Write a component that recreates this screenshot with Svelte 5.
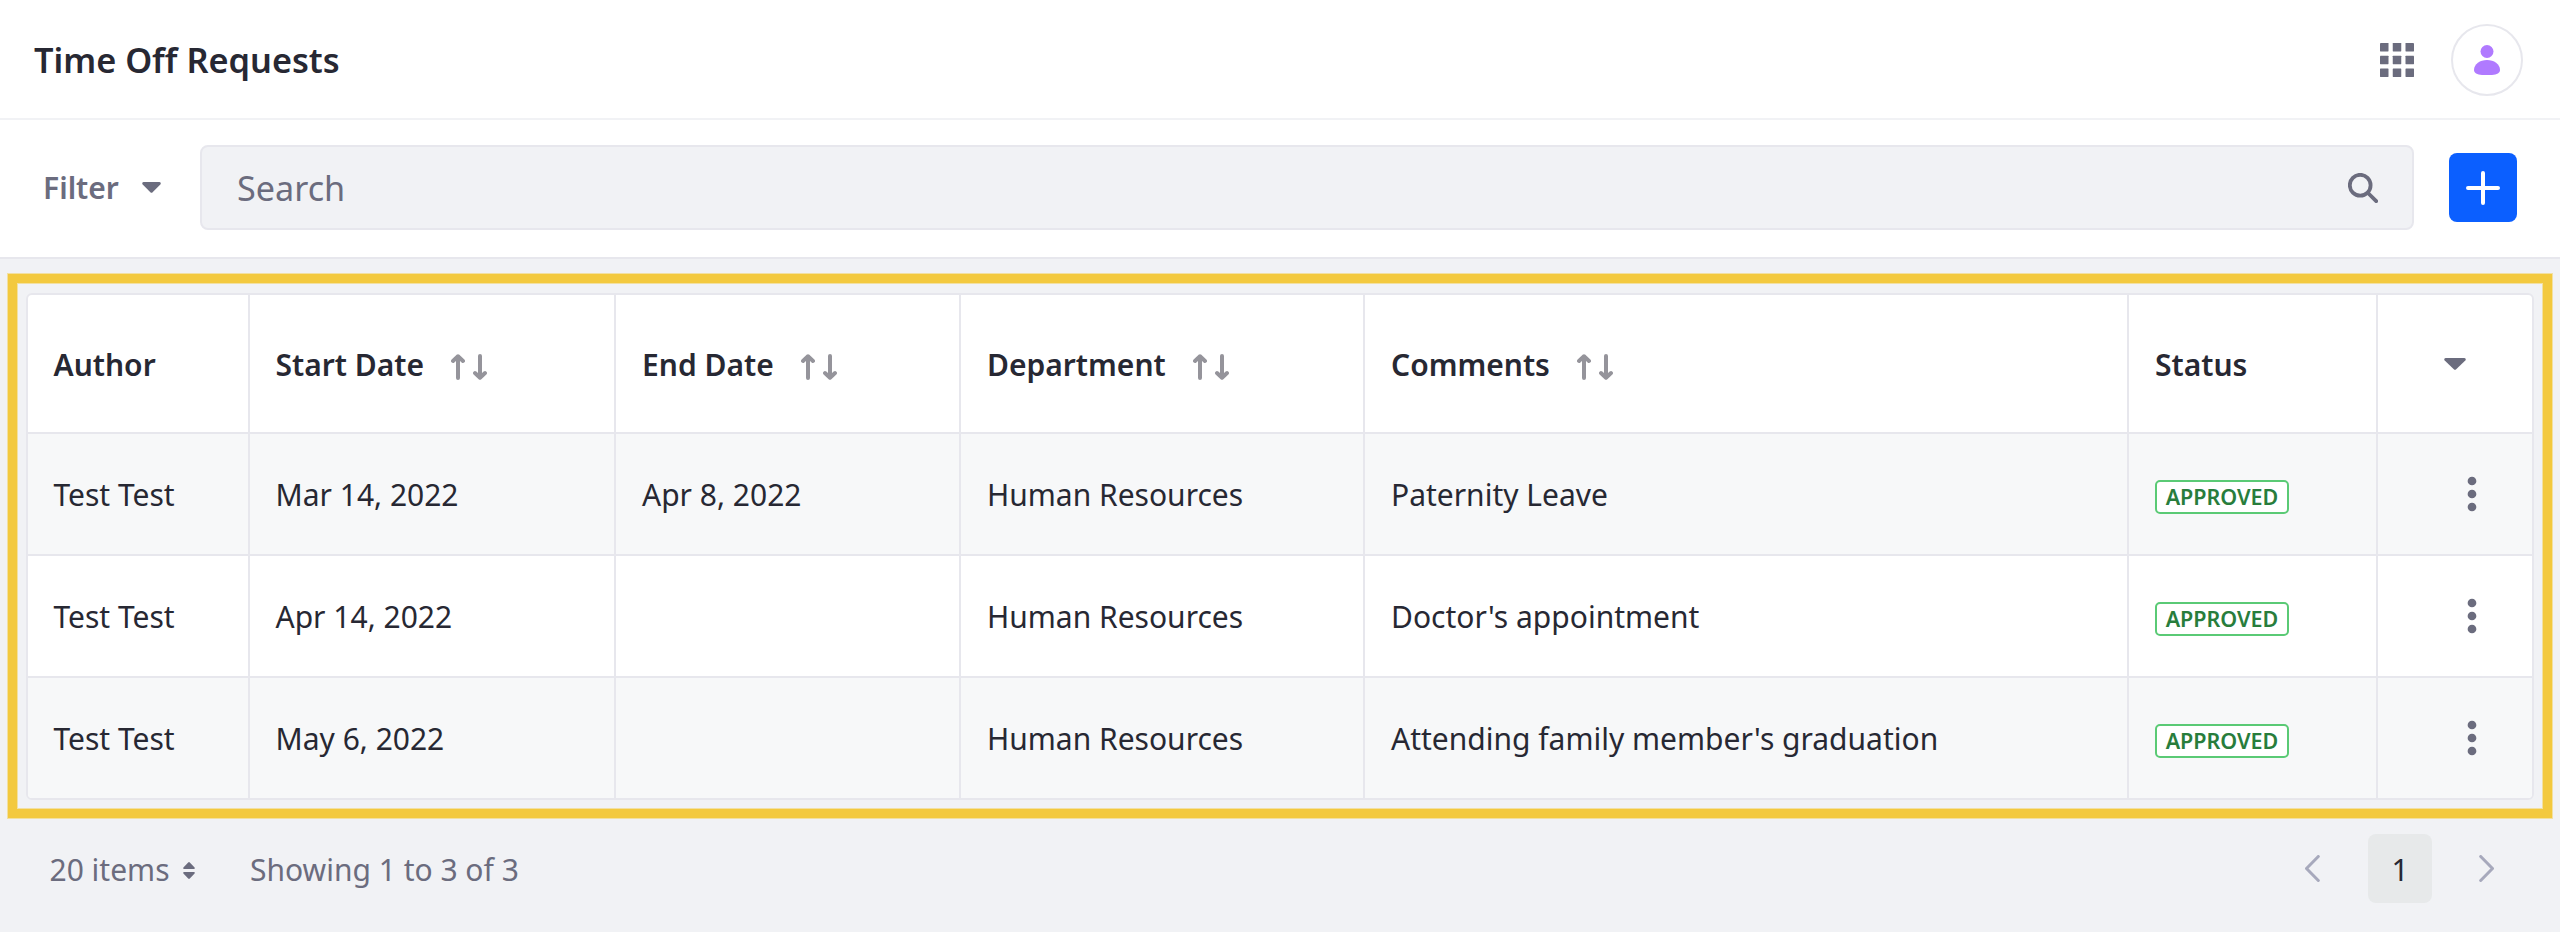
<script>
  const columns = [
    { label: 'Author', width: 222 },
    { label: 'Start Date', width: 366, sortable: true },
    { label: 'End Date', width: 345, sortable: true },
    { label: 'Department', width: 404, sortable: true },
    { label: 'Comments', width: 764, sortable: true },
    { label: 'Status', width: 249 }
  ];
  const rows = [
    ['Test Test', 'Mar 14, 2022', 'Apr 8, 2022', 'Human Resources', 'Paternity Leave'],
    ['Test Test', 'Apr 14, 2022', '', 'Human Resources', "Doctor's appointment"],
    ['Test Test', 'May 6, 2022', '', 'Human Resources', "Attending family member's graduation"]
  ];
  const cells = [0, 1, 2];
</script>

<div class="page">
  <header>
    <h1>Time Off Requests</h1>
    <svg class="apps" width="34" height="34" viewBox="0 0 16 16" fill="#6b6c7e">
      {#each cells as r}{#each cells as c}<rect x={c * 6} y={r * 6} width="4" height="4" rx=".2" />{/each}{/each}
    </svg>
    <span class="avatar">
      <svg width="26" height="30" viewBox="0 0 26 30" fill="#b07aff">
        <circle cx="13" cy="6.5" r="6.5" />
        <path d="M13 15C20 15 26 19 26 25C26 29 21 30.2 13 30.2S0 29 0 25C0 19 6 15 13 15Z" />
      </svg>
    </span>
  </header>

  <div class="toolbar">
    <button class="filter"><span>Filter</span>
      <svg width="19" height="11" viewBox="0 0 19 11"><path d="M1.5 0H17.5Q19.6 .6 18.3 2.4L10.6 10.2Q9.5 11.2 8.4 10.2L.7 2.4Q-.6 .6 1.5 0Z" fill="#6b6c7e" /></svg>
    </button>
    <div class="search">
      <span>Search</span>
      <svg width="30" height="30" viewBox="0 0 30 30" fill="none" stroke="#6b6c7e">
        <circle cx="12.2" cy="12.2" r="10.4" stroke-width="3.8" />
        <path d="M20 20L28.2 28.2" stroke-width="3.8" stroke-linecap="round" />
      </svg>
    </div>
    <button class="add" aria-label="Add">
      <svg width="34" height="34" viewBox="0 0 34 34" stroke="#fff" stroke-width="4" stroke-linecap="round"><path d="M17 2V32M2 17H32" /></svg>
    </button>
  </div>

  <main>
    <div class="highlight">
      <table>
        <colgroup>
          {#each columns as c}<col style:width="{c.width}px" />{/each}
          <col style:width="154px" />
        </colgroup>
        <thead>
          <tr>
            {#each columns as c}
              <th><div class="label">{c.label}
                {#if c.sortable}
                  <svg width="36" height="26" viewBox="0 0 36 26" fill="none" stroke="#95949b" stroke-width="4" stroke-linecap="round" stroke-linejoin="round">
                    <path d="M7 2.3V24M2 7L7 2.3L12 7M29 2V23.7M24 19L29 23.7L34 19" />
                  </svg>
                {/if}
              </div></th>
            {/each}
            <th class="menu"><svg width="22" height="12" viewBox="0 0 22 12"><path d="M1.6 0H20.4Q22.6 .6 21.3 2.5L12.2 11.2Q11 12.3 9.8 11.2L.7 2.5Q-.6 .6 1.6 0Z" fill="#6b6c7e" /></svg></th>
          </tr>
        </thead>
        <tbody>
          {#each rows as row}
            <tr>
              {#each row as cell}<td>{cell}</td>{/each}
              <td class="status"><div><span class="badge">APPROVED</span></div></td>
              <td class="actions">
                <svg width="10" height="36" viewBox="0 0 10 36" fill="#6b6c7e"><circle cx="5" cy="5" r="4.35" /><circle cx="5" cy="18" r="4.35" /><circle cx="5" cy="31" r="4.35" /></svg>
              </td>
            </tr>
          {/each}
        </tbody>
      </table>
    </div>

    <footer>
      <span class="size"><span>20 items</span>
        <svg width="12" height="17" viewBox="0 0 12 17" fill="#6b6c7e"><path d="M5.2 .4Q6 -.3 6.8 .4L11.6 5.4Q12.2 6.8 11 7H1Q-.2 6.8 .4 5.4ZM5.2 16.6Q6 17.3 6.8 16.6L11.6 11.6Q12.2 10.2 11 10H1Q-.2 10.2 .4 11.6Z" /></svg>
      </span>
      <span class="showing">Showing 1 to 3 of 3</span>
      <nav>
        <svg width="15" height="27" viewBox="0 0 15 27"><path d="M13.3 1.5L1.5 13.5L13.3 25.5" /></svg>
        <span class="current">1</span>
        <svg width="15" height="27" viewBox="0 0 15 27"><path d="M1.7 1.5L13.5 13.5L1.7 25.5" /></svg>
      </nav>
    </footer>
  </main>
</div>

<style>
  :global(body) { margin: 0; background: #f1f2f5; }
  .page { width: 2560px; height: 932px; display: flex; flex-direction: column; overflow: hidden; background: #f1f2f5; color: #272833; font-family: "Noto Sans", sans-serif; font-size: 30px; line-height: 47px; }
  .page * { box-sizing: border-box; }
  svg { display: block; flex: none; }
  button { border: 0; padding: 0; font: inherit; background: none; }
  header { height: 120px; flex: none; display: flex; align-items: center; padding: 0 37px 0 34px; background: #fff; border-bottom: 2px solid #f1f2f5; }
  h1 { margin: 0 auto 0 0; padding-top: 1px; font-size: 34.3px; font-weight: 600; }
  header .apps, header .avatar { position: relative; top: 1px; }
  .avatar { width: 72px; height: 72px; margin-left: 37px; display: flex; align-items: center; justify-content: center; border: 2px solid #e7e7ed; border-radius: 50%; }
  .toolbar { height: 139px; flex: none; display: flex; align-items: center; padding: 0 43px 2px 43px; background: #fff; border-bottom: 2px solid #e7e7ed; }
  .filter { width: 157px; display: flex; align-items: center; gap: 23px; color: #6b6c7e; font-weight: 600; }
  .search { flex: 1; height: 85px; display: flex; align-items: center; justify-content: space-between; padding: 0 34px 0 35px; background: #f1f2f5; border: 2px solid #e7e7ed; border-radius: 8px; color: #6b6c7e; font-size: 34.2px; }
  .add { width: 68px; height: 69px; margin-left: 35px; display: flex; align-items: center; justify-content: center; background: #0b5fff; border-radius: 8px; }
  main { padding: 15px 8px 0; }
  .highlight { height: 544px; padding: 10px 9px 9px; border: 9px solid #f3c93f; box-shadow: 0 0 0 1px rgba(243, 201, 63, .45), inset 0 0 0 1px rgba(243, 201, 63, .45); }
  table { width: 2508px; table-layout: fixed; border-collapse: separate; border-spacing: 0; border: 2px solid #e7e7ed; border-radius: 6px; overflow: hidden; background: #fff; }
  th, td { padding: 1px 26px 0; text-align: left; vertical-align: middle; white-space: nowrap; border-right: 2px solid #e7e7ed; border-bottom: 2px solid #e7e7ed; }
  th:nth-child(-n+2), td:nth-child(-n+2) { padding-left: 25.5px; }
  th:last-child, td:last-child { border-right: 0; }
  tr:last-child td { border-bottom: 0; }
  th { height: 139px; padding-top: 2px; font-weight: 600; }
  td { height: 122px; }
  tr:last-child td { height: 120px; }
  tbody tr:nth-child(odd) { background: #f7f8f9; }
  .label { display: flex; align-items: center; gap: 27px; }
  .label svg { position: relative; top: 2px; }
  th.menu, td.actions { padding-top: 0; }
  .menu svg { margin-left: 40px; }
  .actions svg { margin-left: 63px; }
  td.status { padding-top: 6px; }
  .status div { display: flex; }
  .badge { width: 134px; height: 34px; text-align: center; line-height: 30px; font-size: 21.5px; font-weight: 600; color: #287d3c; background: #fff; border: 2px solid #5aca75; border-radius: 5px; }
  footer { display: flex; align-items: center; height: 69px; margin-top: 16px; padding: 0 58px 0 41.5px; color: #6b6c7e; }
  .size { width: 200.5px; display: flex; align-items: center; gap: 13px; }
  .size span, .showing { padding-top: 2px; }
  .size svg { position: relative; top: 2px; }
  nav { display: flex; align-items: center; margin-left: auto; }
  nav path { fill: none; stroke: #a7a9bc; stroke-width: 3; stroke-linecap: round; stroke-linejoin: round; }
  .current { width: 64px; height: 69px; margin: 0 47px 0 48px; line-height: 71px; text-align: center; color: #272833; background: #e7e9ea; border-radius: 8px; }
</style>
